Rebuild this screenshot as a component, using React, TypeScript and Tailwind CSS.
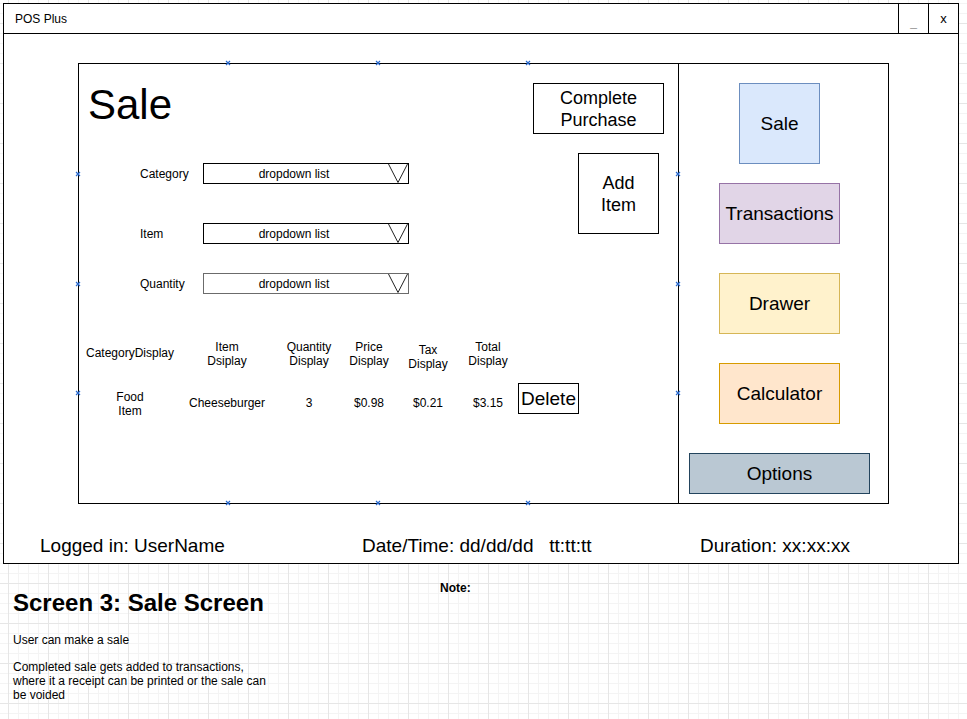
import { ReactNode } from 'react';

const markers = [
  [149, -1], [299, -1], [449, -1],
  [149, 439], [299, 439], [449, 439],
  [-1, 110], [-1, 220], [-1, 329],
  [599, 110], [599, 220], [599, 329],
];

const columns = [
  { head: 'CategoryDisplay', value: 'Food\nItem', w: 'w-[96px]', headTop: 'mt-[6px]', valueTop: 'mt-[7px]' },
  { head: 'Item\nDsiplay', value: 'Cheeseburger', w: 'w-[98px]', headTop: '', valueTop: 'mt-[13px]' },
  { head: 'Quantity\nDisplay', value: '3', w: 'w-[66px]', headTop: '', valueTop: 'mt-[13px]' },
  { head: 'Price\nDisplay', value: '$0.98', w: 'w-[54px]', headTop: '', valueTop: 'mt-[13px]' },
  { head: 'Tax\nDisplay', value: '$0.21', w: 'w-[64px]', headTop: 'mt-[3px]', valueTop: 'mt-[13px]' },
  { head: 'Total\nDisplay', value: '$3.15', w: 'w-[56px]', headTop: '', valueTop: 'mt-[13px]' },
];

function Marker({ x, y }: { x: number; y: number }) {
  return (
    <svg className="absolute h-[6px] w-[6px]" style={{ left: x - 3, top: y - 3 }} viewBox="0 0 6 6">
      <path d="M1 1 L5 5 M5 1 L1 5" stroke="#2a6bd0" strokeWidth="1.2" fill="none" />
    </svg>
  );
}

function Dropdown({ label, top, gray }: { label: string; top: string; gray?: boolean }) {
  return (
    <div className={`flex h-[21px] items-center pl-[61px] ${top}`}>
      <span className="w-[63px] text-[12px]">{label}</span>
      <div className={`flex h-[21px] w-[206px] items-stretch border ${gray ? 'border-[#6b6b6b]' : 'border-black'}`}>
        <span className="flex w-[180px] items-center justify-center text-[12px]">dropdown list</span>
        <svg className="ml-auto h-full w-[20px]" viewBox="0 0 20 19" preserveAspectRatio="none">
          <path d="M0.5 0 L10 18.5 L19.5 0" stroke="#222" strokeWidth="1" fill="none" />
        </svg>
      </div>
    </div>
  );
}

function NavButton({ children, className }: { children: ReactNode; className: string }) {
  return <div className={`flex items-center justify-center border pt-[2px] text-[19px] ${className}`}>{children}</div>;
}

export default function App() {
  return (
    <div className="h-[719px] w-[967px] overflow-hidden bg-white bg-[linear-gradient(to_right,#e6e6e6_1px,transparent_1px),linear-gradient(to_bottom,#e6e6e6_1px,transparent_1px),linear-gradient(to_right,#f4f4f4_1px,transparent_1px),linear-gradient(to_bottom,#f4f4f4_1px,transparent_1px)] bg-[size:40px_40px,40px_40px,10px_10px,10px_10px] bg-[position:8px_23px,8px_23px,8px_3px,8px_3px] pt-[3px] pl-[3px] font-['Liberation_Sans',Arial,sans-serif] text-black">
      {/* window */}
      <div className="flex h-[561px] w-[956px] flex-col border border-black bg-white">
        <div className="flex h-[30px] items-stretch border-b border-black">
          <span className="flex flex-1 items-center pl-[11px] text-[12px]">POS Plus</span>
          <span className="flex w-[30px] items-end justify-center border-l border-black pb-[2px] text-[12px] text-[#9a9a9a]">_</span>
          <span className="flex w-[30px] items-center justify-center border-l border-black text-[13px]">x</span>
        </div>

        <div className="relative ml-[74px] mt-[29px] flex h-[441px] w-[811px] border border-black">
          {/* left section */}
          <div className="flex w-[600px] flex-col border-r border-black">
            <div className="flex">
              <div className="flex flex-col">
                <h1 className="ml-[9px] mt-[18px] text-[42px] leading-[45px]">Sale</h1>
                <Dropdown label="Category" top="mt-[36px]" />
                <Dropdown label="Item" top="mt-[39px]" />
                <Dropdown label="Quantity" top="mt-[29px]" gray />
              </div>
              <div className="ml-auto mr-[14px] flex w-[131px] flex-col">
                <div className="mt-[19px] flex h-[51px] items-center justify-center border border-black text-center text-[18px] leading-[22px]">
                  Complete<br />Purchase
                </div>
                <div className="ml-[45px] mt-[19px] flex h-[81px] w-[81px] items-center justify-center border border-black text-center text-[18px] leading-[22px]">
                  Add<br />Item
                </div>
              </div>
            </div>

            <div className="mt-[46px] flex items-start pl-[3px] text-center text-[12px] leading-[14px]">
              {columns.map((c) => (
                <div key={c.head} className={`${c.w} ${c.headTop} whitespace-pre-line`}>{c.head}</div>
              ))}
            </div>
            <div className="mt-[12px] flex items-start pl-[3px] text-center text-[12px] leading-[14px]">
              {columns.map((c) => (
                <div key={c.head} className={`${c.w} ${c.valueTop} whitespace-pre-line`}>{c.value}</div>
              ))}
              <div className="ml-[2px] flex h-[31px] w-[61px] items-center justify-center border border-black text-[19px]">Delete</div>
            </div>
          </div>

          {/* right section */}
          <div className="flex flex-1 flex-col items-center pl-[10px] pr-[18px]">
            <NavButton className="mt-[19px] h-[81px] w-[81px] border-[#6c8ebf] bg-[#dae8fc]">Sale</NavButton>
            <NavButton className="mt-[19px] h-[61px] w-[121px] border-[#9673a6] bg-[#e1d5e7]">Transactions</NavButton>
            <NavButton className="mt-[29px] h-[61px] w-[121px] border-[#d6b656] bg-[#fff2cc]">Drawer</NavButton>
            <NavButton className="mt-[29px] h-[61px] w-[121px] border-[#d79b00] bg-[#ffe6cc]">Calculator</NavButton>
            <NavButton className="mt-[29px] h-[41px] w-full border-[#23445d] bg-[#bac8d3]">Options</NavButton>
          </div>

          {markers.map(([x, y], i) => (
            <Marker key={i} x={x} y={y} />
          ))}
        </div>

        <div className="mt-[31px] flex pl-[36px] text-[19px] leading-[21px]">
          <span className="w-[322px]">Logged in: UserName</span>
          <span className="w-[338px] whitespace-pre">Date/Time: dd/dd/dd   tt:tt:tt</span>
          <span>Duration: xx:xx:xx</span>
        </div>
      </div>

      {/* notes */}
      <div className="flex">
        <div className="ml-[10px] mt-[25px] flex w-[260px] flex-col">
          <h2 className="text-[24px] font-bold leading-[28px]">Screen 3: Sale Screen</h2>
          <p className="mt-[16px] text-[12px] leading-[14px]">User can make a sale</p>
          <p className="mt-[13px] text-[12px] leading-[14px]">
            Completed sale gets added to transactions, where it a receipt can be printed or the sale can be voided
          </p>
        </div>
        <span className="ml-[167px] mt-[17px] text-[12px] font-bold leading-[14px]">Note:</span>
      </div>
    </div>
  );
}
